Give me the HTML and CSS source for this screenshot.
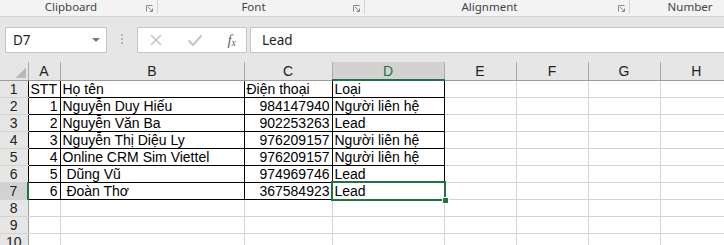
FILE: index.html
```html
<!DOCTYPE html>
<html lang="vi">
<head>
    <meta charset="UTF-8">
    <meta name="viewport" content="width=device-width, initial-scale=1.0">
    <title>Danh sách khách hàng</title>
    <link rel="stylesheet" href="styles.css">
</head>
<body>
    <!-- Ribbon group captions -->
    <div class="ribbon">
        <div class="group group-clipboard">
            <span class="label">Clipboard</span>
            <svg class="launcher" width="7" height="7" viewBox="0 0 7 7"><path d="M0.5 6.5V0.5H6.5M2 2L6 6M3.5 6.5H6.5V3.5" fill="none" stroke="#8a8a8a" stroke-width="1"/></svg>
        </div>
        <div class="group group-font">
            <span class="label">Font</span>
            <svg class="launcher" width="7" height="7" viewBox="0 0 7 7"><path d="M0.5 6.5V0.5H6.5M2 2L6 6M3.5 6.5H6.5V3.5" fill="none" stroke="#8a8a8a" stroke-width="1"/></svg>
        </div>
        <div class="group group-alignment">
            <span class="label">Alignment</span>
            <svg class="launcher" width="7" height="7" viewBox="0 0 7 7"><path d="M0.5 6.5V0.5H6.5M2 2L6 6M3.5 6.5H6.5V3.5" fill="none" stroke="#8a8a8a" stroke-width="1"/></svg>
        </div>
        <div class="group group-number">
            <span class="label">Number</span>
        </div>
    </div>

    <!-- Formula bar -->
    <div class="formula-bar">
        <div class="name-box">
            <span>D7</span>
            <span class="caret"></span>
        </div>
        <div class="grip"><i></i><i></i><i></i></div>
        <div class="fx-buttons">
            <svg width="14" height="14" viewBox="0 0 14 14"><path d="M2 2L12 12M12 2L2 12" stroke="#c4c4c4" stroke-width="1.6"/></svg>
            <svg width="16" height="14" viewBox="0 0 16 14"><path d="M1.5 7.5L6 12L14.5 2.5" fill="none" stroke="#c4c4c4" stroke-width="2"/></svg>
            <span class="fx">f<sub>x</sub></span>
        </div>
        <div class="formula-input">Lead</div>
    </div>

    <!-- Worksheet -->
    <table class="sheet">
        <colgroup>
            <col class="c-head"><col class="c-a"><col class="c-b"><col class="c-c"><col class="c-d">
            <col class="c-e"><col class="c-f"><col class="c-g"><col class="c-h">
        </colgroup>
        <thead>
            <tr>
                <th class="corner"></th>
                <th>A</th><th>B</th><th>C</th><th class="active">D</th>
                <th>E</th><th>F</th><th>G</th><th>H</th>
            </tr>
        </thead>
        <tbody id="sheet-body">
            <!-- rows are built below -->
        </tbody>
    </table>

    <script>
        var rows = [
            ["STT", "Họ tên", "Điện thoại", "Loại"],
            [1, "Nguyễn Duy Hiếu", 984147940, "Người liên hệ"],
            [2, "Nguyễn Văn Ba", 902253263, "Lead"],
            [3, "Nguyễn Thị Diệu Ly", 976209157, "Người liên hệ"],
            [4, "Online CRM Sim Viettel", 976209157, "Người liên hệ"],
            [5, " Dũng Vũ", 974969746, "Lead"],
            [6, " Đoàn Thơ", 367584923, "Lead"]
        ];

        var html = "";
        for (var i = 1; i <= 10; i++) {
            var data = rows[i - 1];
            html += "<tr>";
            html += "<th class='row-head" + (data ? " in-data" : "") + (i === 7 ? " active" : "") + "'>" + i + "</th>";
            if (data) {
                for (var j = 0; j < 4; j++) {
                    var v = data[j];
                    var cls = "data";
                    if (typeof v === "number") cls += " num";
                    if (i === 7 && j === 3) cls += " selected";
                    html += "<td class='" + cls + "'>" + v + "</td>";
                }
                html += "<td></td><td></td><td></td><td></td>";
            } else {
                html += "<td></td><td></td><td></td><td></td><td></td><td></td><td></td><td></td>";
            }
            html += "</tr>";
        }
        document.getElementById("sheet-body").innerHTML = html;
    </script>
</body>
</html>
```

FILE: styles.css
```css
body {
    margin: 0;
    padding: 0;
    overflow: hidden;
    background: #fff;
    font-family: "Liberation Sans", Arial, sans-serif;
}

/* Ribbon captions */
.ribbon {
    display: flex;
    height: 16px;
    background: #f3f3f3;
    border-bottom: 1px solid #d5d5d5;
    font-family: "Noto Sans", sans-serif;
    font-size: 11.5px;
    color: #444;
}

.group {
    display: flex;
    align-items: center;
    flex: none;
    height: 14px;
    border-right: 1px solid #d5d5d5;
}

.group .label {
    flex: 1;
    text-align: center;
    line-height: 16px;
}

.group .launcher {
    margin: 3px 4px 0 4px;
}

.group-clipboard { width: 157px; }
.group-font { width: 206px; }
.group-alignment { width: 264px; }
.group-number { width: 120px; border-right: none; }

/* Formula bar */
.formula-bar {
    display: flex;
    align-items: flex-start;
    height: 45px;
    padding-top: 10px;
    box-sizing: border-box;
    background: #e6e6e6;
}

.name-box {
    display: flex;
    align-items: center;
    justify-content: space-between;
    width: 102px;
    height: 26px;
    margin-left: 5px;
    padding: 0 6px 0 7px;
    box-sizing: border-box;
    background: #fff;
    border: 1px solid #c6c6c6;
    font-family: "Noto Sans", sans-serif;
    font-size: 13.5px;
    color: #222;
}

.caret {
    width: 0;
    height: 0;
    border-left: 4px solid transparent;
    border-right: 4px solid transparent;
    border-top: 4px solid #777;
}

.grip {
    display: flex;
    flex-direction: column;
    align-items: center;
    gap: 2px;
    width: 30px;
    padding-top: 7px;
}

.grip i {
    width: 2px;
    height: 2px;
    background: #b5b5b5;
}

.fx-buttons {
    display: flex;
    align-items: center;
    justify-content: space-between;
    width: 110px;
    height: 26px;
    padding: 0 10px 0 11px;
    box-sizing: border-box;
    background: #fff;
    border: 1px solid #c6c6c6;
}

.fx {
    font-family: "Liberation Serif", serif;
    font-style: italic;
    font-size: 15px;
    color: #666;
}

.fx sub {
    font-size: 10px;
    vertical-align: -1px;
}

.formula-input {
    flex: 1;
    height: 26px;
    margin-left: 3px;
    padding-left: 11px;
    box-sizing: border-box;
    background: #fff;
    border: 1px solid #c6c6c6;
    border-right: none;
    font-family: "Noto Sans", sans-serif;
    font-size: 13.5px;
    line-height: 24px;
    color: #222;
}

/* Worksheet grid */
.sheet {
    border-collapse: collapse;
    table-layout: fixed;
    width: 732px;
    font-size: 14px;
}

.c-head { width: 28px; }
.c-a { width: 32px; }
.c-b { width: 184px; }
.c-c { width: 88px; }
.c-d { width: 112px; }
.c-e { width: 72px; }
.c-f { width: 72px; }
.c-g { width: 72px; }
.c-h { width: 72px; }

.sheet thead th {
    height: 17px;
    padding: 0;
    background: #e6e6e6;
    border-left: 1px solid #ababab;
    border-bottom: 1px solid #9b9b9b;
    font-weight: normal;
    color: #222;
    line-height: 16px;
}

.sheet thead th.corner {
    border-left: none;
    border-right: 1px solid #ababab;
    background: #e6e6e6 linear-gradient(to bottom right, transparent 50%, #b9b9b9 50%) no-repeat right 2px bottom 2px / 10px 10px;
}

.sheet thead th.active {
    background: #d2d2d2;
    color: #217346;
    border-bottom: 2px solid #217346;
}

.sheet tbody tr {
    height: 17px;
}

.sheet td,
.sheet .row-head {
    padding: 0 2px;
    line-height: 16px;
    white-space: pre;
    overflow: hidden;
    border: 1px solid #d4d4d4;
}

.sheet .row-head {
    background: #e6e6e6;
    border-right: 1px solid #9b9b9b;
    border-left: none;
    font-weight: normal;
    text-align: center;
    color: #222;
}

.sheet .row-head.in-data {
    border-right: 1px solid #000;
}

.sheet .row-head.active {
    background: #d2d2d2;
    border-right: 2px solid #217346;
}

.sheet td.data {
    border: 1px solid #000;
    color: #000;
}

.sheet td.num {
    text-align: right;
}

/* Active cell frame and fill handle */
.sheet td.selected {
    position: relative;
    overflow: visible;
}

.sheet td.selected::after {
    content: "";
    position: absolute;
    left: -2px;
    top: -2px;
    right: -2px;
    bottom: -2px;
    border: 2px solid #217346;
}

.sheet td.selected::before {
    content: "";
    position: absolute;
    right: -5px;
    bottom: -5px;
    width: 5px;
    height: 5px;
    background: #217346;
    border: 1px solid #fff;
    z-index: 1;
}
```
